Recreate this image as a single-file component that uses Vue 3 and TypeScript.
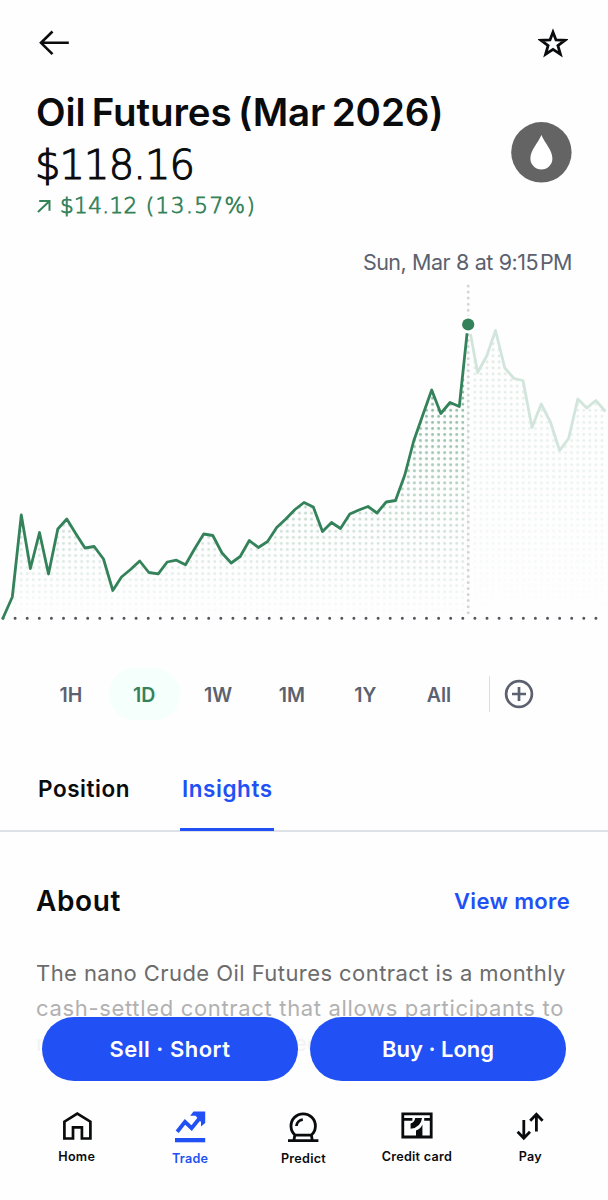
<script setup lang="ts">
const past: [number, number][] = [
  [3, 618], [12.3, 597], [21.3, 515], [30.4, 568.5], [39.5, 532.5], [48.5, 574], [57.8, 529], [66.8, 519], [76, 534], [85, 548], [94.2, 546.5], [103.5, 559], [112.8, 590.5], [121.5, 577], [130.5, 569.5], [139.7, 561], [148.9, 572.5], [158.2, 573.8], [167.2, 562], [176.4, 560.2], [185.5, 564.8], [194.5, 549], [203.7, 534], [212.8, 535.5], [222, 553], [231.2, 563], [240.2, 556.5], [249.3, 540.5], [258.4, 547.5], [267.6, 541.5], [276.7, 527.5], [285.8, 519], [295, 509.5], [304, 502.5], [313.3, 507], [322.5, 531.5], [331.5, 522.5], [340.5, 528.5], [349.8, 514], [358.9, 510], [368, 506.5], [377, 513], [386.2, 502], [395.5, 500.5], [404.8, 475], [413.7, 441], [422.8, 415], [431.7, 390], [440.8, 413.5], [450, 402.5], [459.3, 406.5], [467, 334]
]
const future: [number, number][] = [
  [470.5, 334], [477.6, 372.5], [486.7, 356], [495.5, 330.5], [504.8, 368], [514, 378.5], [523, 380.5], [532, 427.5], [541.2, 404], [550.4, 422], [559.6, 450.5], [568.6, 438.5], [577.8, 399], [586.8, 408], [595.8, 400.5], [605.5, 411.5]
]
const toPoints = (p: [number, number][]) => p.map(([x, y]) => `${x},${y - 280}`).join(' ')
const pastLine = toPoints(past)
const futureLine = toPoints(future)
const pastArea = pastLine + ' 468,338 3,338'
const futureArea = futureLine + ' 608,338 469,338'

const ranges = [
  { label: '1H', active: false }, { label: '1D', active: true }, { label: '1W', active: false },
  { label: '1M', active: false }, { label: '1Y', active: false }, { label: 'All', active: false }
]
</script>

<template>
  <main class="screen">
    <header class="topbar">
      <svg class="back" width="32" height="26" viewBox="0 0 32 26"><path d="M3.5 12.8H31.8M15.5 1.5 4 12.8 15.5 24.2" fill="none" stroke="#0a0b0d" stroke-width="2.6" /></svg>
      <svg class="star" width="30" height="30" viewBox="0 0 30 30"><path d="M15 4.2 18 12 27 12.3 19.9 17.6 22.4 26.2 15 21.4 7.6 26.2 10.1 17.6 3 12.3 12 12Z" fill="none" stroke="#0a0b0d" stroke-width="2.8" /></svg>
    </header>

    <section class="summary">
      <div class="quote">
        <h1>Oil Futures (Mar 2026)</h1>
        <div class="price">$118.16</div>
        <div class="change">
          <svg width="16" height="16" viewBox="0 0 16 16"><path d="M2 14 13 3.6M3.2 3H13.5V12.8" fill="none" stroke="#34825a" stroke-width="2" /></svg>
          <span class="amount">$14.12</span><span class="pct">(13.57%)</span>
        </div>
      </div>
      <svg class="coin" width="62" height="62" viewBox="0 0 62 62"><circle cx="31.4" cy="31.3" r="30.2" fill="#646464" /><path d="M31.4 14C34.4 21.5 42.4 29 42.4 37.5A11 11 0 0 1 20.4 37.5C20.4 29 28.4 21.5 31.4 14Z" fill="#fff" /></svg>
    </section>

    <div class="stamp">Sun, Mar 8 at 9:15<i class="thin"></i>PM</div>

    <svg class="chart" width="608" height="350" viewBox="0 0 608 350">
      <defs>
        <pattern id="dots" x="0" y="0" width="6.05" height="6.05" patternUnits="userSpaceOnUse"><circle cx="3" cy="3.2" r="1.55" fill="#34825a" /></pattern>
        <linearGradient id="fade" gradientUnits="userSpaceOnUse" x1="0" y1="50" x2="0" y2="338"><stop offset="0" stop-color="#fff" stop-opacity=".72" /><stop offset=".5" stop-color="#fff" stop-opacity=".38" /><stop offset="1" stop-color="#fff" stop-opacity="0" /></linearGradient>
        <mask id="fadeMask" maskUnits="userSpaceOnUse" x="0" y="0" width="608" height="350"><rect width="608" height="350" fill="url(#fade)" /></mask>
      </defs>
      <g mask="url(#fadeMask)">
        <polygon :points="pastArea" fill="url(#dots)" />
        <polygon :points="futureArea" fill="url(#dots)" opacity=".22" />
      </g>
      <path d="M468.2 6V334" stroke="#d4d5d9" stroke-width="3" stroke-linecap="round" stroke-dasharray="0 6.05" />
      <path d="M3 338.3H606" stroke="#54545c" stroke-width="3" stroke-linecap="round" stroke-dasharray="0 12.1" />
      <polyline :points="futureLine" fill="none" stroke="#d1e5dc" stroke-width="2.8" stroke-linejoin="round" />
      <polyline :points="pastLine" fill="none" stroke="#34825a" stroke-width="2.8" stroke-linejoin="round" stroke-linecap="round" />
      <circle cx="468.2" cy="44.5" r="9" fill="#fff" />
      <circle cx="468.2" cy="44.5" r="6.1" fill="#34825a" />
    </svg>

    <nav class="ranges">
      <button v-for="r in ranges" :key="r.label" :class="{ active: r.active }">{{ r.label }}</button>
      <span class="divider"></span>
      <svg width="30" height="30" viewBox="0 0 30 30"><g fill="none" stroke="#5b616e" stroke-width="2.7"><circle cx="15" cy="15" r="12.9" /><path d="M15 8V22M8 15H22" /></g></svg>
    </nav>

    <nav class="tabs">
      <a>Position</a>
      <a class="on">Insights</a>
    </nav>

    <section class="about">
      <div class="about-head">
        <h2>About</h2>
        <a>View more</a>
      </div>
      <p>
        <span class="line l1">The nano Crude Oil Futures contract is a monthly</span>
        <span class="line l2">cash-settled contract that allows participants to</span>
        <span class="line l3">manage risk, trade and hedge</span>
      </p>
    </section>

    <div class="actions">
      <button class="sell">Sell · Short</button>
      <button>Buy · Long</button>
    </div>

    <footer class="bottom">
      <a>
        <svg width="34" height="32" viewBox="0 0 34 32"><path d="M4.4 28.5V11.7L17.3 3.6 30.4 11.7V28.5H21.9V17.3H13V28.5Z" fill="none" stroke="#0a0b0d" stroke-width="2.7" /></svg>
        <span>Home</span>
      </a>
      <a class="on">
        <svg width="34" height="34" viewBox="0 0 34 34"><path d="M4.2 21.8 12 11.8 18.6 18.2 28 6.5" fill="none" stroke="#2151f5" stroke-width="3.9" /><path d="M20.5 1.6H32.2V13L28 16.6V12L22.5 5.8H17.2Z" fill="#2151f5" /><path d="M2 28H32.2V32.3H2Z" fill="#2151f5" /></svg>
        <span>Trade</span>
      </a>
      <a>
        <svg width="34" height="34" viewBox="0 0 34 34"><g fill="none" stroke="#0a0b0d" stroke-width="2.8"><path d="M9.2 25.2A12.2 12.2 0 1 1 25.2 25.2ZM8.8 25L8 30M25.4 25L26.2 30M2 30.6H32.4" /><path d="M10.4 16A7 7 0 0 1 16.8 9.6" /></g></svg>
        <span>Predict</span>
      </a>
      <a>
        <svg width="34" height="32" viewBox="0 0 34 32"><path d="M2.8 3.8H31.2V27H2.8Z" fill="none" stroke="#0a0b0d" stroke-width="2.8" /><path d="M3 9.4H12.4M24.2 9.4H31" stroke="#0a0b0d" stroke-width="2.8" /><path d="M15.2 8H22Q21 17.4 10.6 18.8V13.6Q14.4 12.6 15.2 8ZM16 20.4Q20.6 18.8 22.4 14.4V27H16Z" fill="#0a0b0d" /></svg>
        <span>Credit card</span>
      </a>
      <a>
        <svg width="34" height="32" viewBox="0 0 34 32"><path d="M10.8 10V28.3M4.6 21.8 10.8 28.2 17 21.8M23.4 21.5V4.2M17.2 10.7 23.4 4.3 29.6 10.7" fill="none" stroke="#0a0b0d" stroke-width="2.8" /></svg>
        <span>Pay</span>
      </a>
    </footer>
  </main>
</template>

<style>
body { margin: 0; background: #fefefe; }
</style>
<style scoped>
* { box-sizing: border-box; }
.screen { width: 608px; height: 1200px; overflow: hidden; background: #fefefe; color: #0a0b0d; font-family: Inter, "Liberation Sans", sans-serif; display: flex; flex-direction: column; }
svg { display: block; flex: none; }
span { white-space: nowrap; }
button { border: 0; background: none; padding: 0; font-family: inherit; }
.topbar { height: 86px; padding: 28px 40px 0 37px; display: flex; justify-content: space-between; flex: none; }
.back { margin-top: 2px; }
.summary { height: 150px; padding: 0 36px 0 36px; display: flex; justify-content: space-between; flex: none; }
h1 { margin: 0; height: 52px; line-height: 52px; font-size: 38.5px; font-weight: 600; letter-spacing: -.1px; word-spacing: -3.2px; white-space: nowrap; }
.price { height: 54px; line-height: 54px; font-family: "DejaVu Sans", sans-serif; font-weight: 200; font-size: 40px; letter-spacing: -.9px; margin-left: -1px; -webkit-text-stroke: 1.1px #0a0b0d; }
.change { height: 28px; display: flex; align-items: center; color: #34825a; font-family: "DejaVu Sans", sans-serif; font-weight: 200; -webkit-text-stroke: .8px #34825a; font-size: 21.5px; line-height: 28px; }
.amount { margin-left: 8px; letter-spacing: .4px; }
.pct { margin-left: 8px; letter-spacing: 1.5px; }
.coin { margin-top: 35px; }
.stamp { height: 44px; padding: 12px 36px 0 0; line-height: 28px; font-size: 21.5px; letter-spacing: -.55px; word-spacing: .5px; color: #5b616e; text-align: right; flex: none; }
.thin { display: inline-block; width: 2px; }
.ranges { margin-top: 38px; height: 52px; padding-left: 35px; display: flex; align-items: center; flex: none; }
.ranges button { width: 71px; height: 52px; padding: 1px 0 0 1px; border-radius: 26px; margin-right: 2.6px; font-size: 19.5px; font-weight: 600; color: #5b616e; }
.ranges .active { background: #f5fffb; color: #34825a; padding-left: 0; }
.divider { width: 1.5px; height: 36px; background: #dcdee2; margin: 0 14px 0 12px; }
.tabs { margin-top: 40px; height: 72px; padding-left: 36px; display: flex; gap: 49px; border-bottom: 2px solid #dee1e7; font-size: 22.5px; font-weight: 600; line-height: 57px; letter-spacing: .55px; flex: none; }
.tabs a { height: 71px; padding: 0 1px 0 2px; }
.tabs .on { color: #2151f5; border-bottom: 3px solid #2151f5; }
.about { height: 186px; padding: 47px 38px 0 36px; flex: none; }
.about-head { display: flex; justify-content: space-between; align-items: center; height: 44px; }
h2 { margin: 0; font-size: 28px; font-weight: 600; letter-spacing: .6px; }
.about-head a { color: #2151f5; font-size: 22px; font-weight: 600; letter-spacing: .35px; }
p { margin: 33px 0 0; font-size: 22px; line-height: 35px; color: #6c6c6c; }
.line { display: block; }
.l1 { letter-spacing: .43px; }
.l2 { color: #b1b1b1; letter-spacing: .67px; }
.l3 { color: #f3f3f3; }
.actions { height: 64px; margin-top: -1px; padding: 0 42px; display: grid; grid-template-columns: 1fr 1fr; gap: 12px; position: relative; flex: none; }
.actions button { background: #2151f5; border-radius: 32px; color: #fff; font-size: 22px; font-weight: 600; }
.actions .sell { letter-spacing: .5px; }
.bottom { margin-top: 29px; padding: 0 21px 0 20px; display: grid; grid-template-columns: repeat(5, 1fr); flex: none; }
.bottom a { display: flex; flex-direction: column; align-items: center; font-size: 12.6px; font-weight: 600; line-height: 18px; letter-spacing: .25px; gap: 6px; }
.bottom .on { color: #2151f5; }
</style>
